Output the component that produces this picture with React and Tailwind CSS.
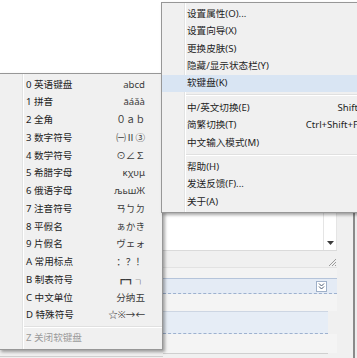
const mainGroups = [
  [
    { label: "设置属性(O)..." },
    { label: "设置向导(X)" },
    { label: "更换皮肤(S)" },
    { label: "隐藏/显示状态栏(Y)" },
    { label: "软键盘(K)", active: true },
  ],
  [
    { label: "中/英文切换(E)", shortcut: "Shift" },
    { label: "简繁切换(T)", shortcut: "Ctrl+Shift+F" },
    { label: "中文输入模式(M)" },
  ],
  [{ label: "帮助(H)" }, { label: "发送反馈(F)..." }, { label: "关于(A)" }],
];

const keyboards = [
  ["0 英语键盘", "abcd"],
  ["1 拼音", "āáǎà"],
  ["2 全角", "０ａｂ"],
  ["3 数字符号", "㈠Ⅱ③"],
  ["4 数学符号", "⊙∠∑"],
  ["5 希腊字母", "κχυμ"],
  ["6 俄语字母", "љьшЖ"],
  ["7 注音符号", "ㄢㄅㄉ"],
  ["8 平假名", "ぁかき"],
  ["9 片假名", "ヴェォ"],
  ["A 常用标点", "：？！"],
  ["B 制表符号", "┏┓┐"],
  ["C 中文单位", "分纳五"],
  ["D 特殊符号", "☆※→←"],
];

function Separator({ className }) {
  return (
    <div className={`flex flex-col justify-center ${className}`}>
      <div className="h-px bg-[#e0e0e0]" />
      <div className="h-px bg-white" />
    </div>
  );
}

function MainMenu() {
  return (
    <div className="absolute left-[161px] top-[2px] w-[210px] border border-[#979797] bg-[#f0f0f0] py-[2px] shadow-[2px_2px_3px_rgba(0,0,0,0.35)]">
      {/* gutter line */}
      <div className="absolute bottom-0 left-[22px] top-0 w-px bg-[#e2e3e3]" />
      <div className="absolute bottom-0 left-[23px] top-0 w-px bg-white" />
      {mainGroups.map((group, gi) => (
        <div key={gi}>
          {gi > 0 && <Separator className="h-[7px] pl-[24px]" />}
          {group.map((item) => (
            <div
              key={item.label}
              className={`relative flex h-[17.4px] items-center justify-between pl-[25px] pr-[12px] ${
                item.active ? "bg-[#d9e5f3]" : ""
              }`}
            >
              <span>{item.label}</span>
              {item.shortcut && <span>{item.shortcut}</span>}
            </div>
          ))}
        </div>
      ))}
    </div>
  );
}

function KeyboardMenu() {
  return (
    <div className="absolute left-[-1px] top-[73px] w-[164px] border border-[#979797] bg-[#f0f0f0] pb-[2px] pt-[1.5px] shadow-[2px_2px_3px_rgba(0,0,0,0.35)]">
      <div className="absolute bottom-0 left-[22px] top-0 w-px bg-[#e2e3e3]" />
      <div className="absolute bottom-0 left-[23px] top-0 w-px bg-white" />
      {keyboards.map(([name, sample]) => (
        <div
          key={name}
          className="relative flex h-[17.75px] items-center justify-between pl-[26px] pr-[17px]"
        >
          <span>{name}</span>
          <span className="text-[#3a3a3a]">{sample}</span>
        </div>
      ))}
      <Separator className="h-[5px] pl-[24px]" />
      <div className="relative flex h-[17.75px] items-center pl-[26px] text-[#9b9b9b]">
        Z 关闭软键盘
      </div>
    </div>
  );
}

export default function App() {
  return (
    <div className="relative flex h-[358px] w-[357px] flex-col overflow-hidden bg-[#f0f0f0] font-['Noto_Sans','Noto_Sans_CJK_SC',sans-serif] text-[9.6px] leading-none text-[#1e1e1e]">
      {/* window behind the menus */}
      <div className="h-[73px] shrink-0 bg-white" />
      <div className="flex flex-1">
        <div className="flex w-[163px] flex-col justify-end">
          <div className="h-[2px] border-t border-[#cfcfcf]" />
        </div>
        <div className="flex w-[174px] flex-col">
          <div className="flex h-[177px]">
            <div className="flex-1 bg-white" />
            <div className="flex w-[14px] flex-col items-center justify-end border-x border-[#e5e5e5] bg-white pb-[5px]">
              <svg width="7" height="4" viewBox="0 0 7 4">
                <path d="M0 0h7L3.5 4z" fill="#3c3c3c" />
              </svg>
            </div>
          </div>
          <div className="h-px bg-[#dadada]" />
          <div className="flex h-[16px] items-end justify-end bg-[#f0f0f0]">
            <svg width="10" height="10" viewBox="0 0 10 10">
              <path d="M9 2L2 9M9 5L5 9M9 8L8 9" stroke="#9a9a9a" strokeWidth="1" />
            </svg>
          </div>
          <div className="h-px bg-[#e2e2e2]" />
          <div className="h-[10px] bg-[#f3f3f3]" />
          <div className="h-px bg-[#b5c4da]" />
          <div className="flex h-[15px] items-center justify-end border-b border-dashed border-[#9db1cf] bg-[#e4ebf5] pr-[10px]">
            <div className="flex h-[11px] w-[11px] items-center justify-center border border-[#9fb0c8] bg-white">
              <svg width="7" height="7" viewBox="0 0 7 7">
                <path d="M1 0.5L3.5 3L6 0.5M1 3.5L3.5 6L6 3.5" stroke="#4a5a72" strokeWidth="1" fill="none" />
              </svg>
            </div>
          </div>
          <div className="h-[17px] bg-[#f4f4f4]" />
          <div className="mr-[9px] h-px bg-[#cdd6e3]" />
          <div className="mr-[9px] h-[22px] border-b border-dashed border-[#9db1cf] bg-[#e6edf6]" />
          <div className="h-[19px] bg-[#f4f4f4]" />
          <div className="mr-[9px] h-px bg-[#cfcfcf]" />
        </div>
        <div className="w-[16px] bg-[#f0f0f0]" />
        <div className="w-[2px] bg-[#8a8a8a]" />
        <div className="flex-1 bg-[#ededed]" />
      </div>

      <KeyboardMenu />
      <MainMenu />
    </div>
  );
}
